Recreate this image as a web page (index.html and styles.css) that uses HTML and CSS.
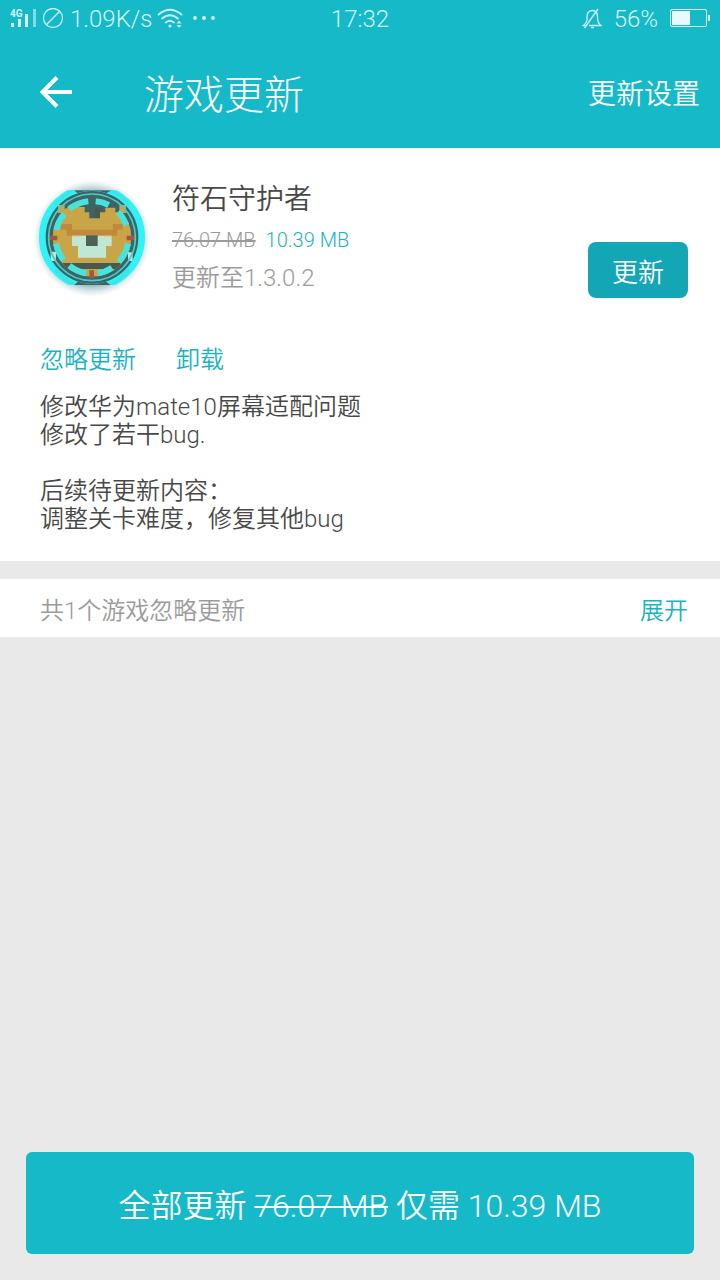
FILE: index.html
```html
<!DOCTYPE html>
<html lang="zh-CN">
<head>
  <meta charset="UTF-8">
  <meta name="viewport" content="width=device-width, initial-scale=1.0">
  <title>游戏更新</title>
  <link rel="stylesheet" href="styles.css">
</head>
<body>
  <div class="statusbar">
    <div class="status-left">
      <svg class="signal" width="28" height="22" viewBox="0 0 28 22">
        <text x="0" y="9" class="net">4G</text>
        <g fill="#d6f6fa">
          <rect x="1" y="15" width="3" height="4"/>
          <rect x="8" y="11" width="3" height="8"/>
          <rect x="15" y="6" width="3" height="13"/>
        </g>
        <rect x="23" y="1" width="3" height="18" fill="#7edce6"/>
      </svg>
      <svg width="22" height="22" viewBox="0 0 22 22" fill="none" stroke="#c4f2f7" stroke-width="1.3">
        <circle cx="11" cy="10" r="9.5"/>
        <path d="M4.3 16.7 17.7 3.3"/>
      </svg>
      <span class="speed">1.09K/s</span>
      <svg class="wifi" width="26" height="22" viewBox="0 0 26 22" fill="none" stroke="#c4f2f7" stroke-width="1.9">
        <path d="M1 7Q13-3.500 25 7"/>
        <path d="M4.5 11Q13 3.5 21.5 11"/>
        <path d="M8.2 15Q13 10.5 17.5 15"/>
        <circle cx="13" cy="18" r="1.6" fill="#c4f2f7" stroke="none"/>
        <path d="M19.5 15.5 22 12.5l2.5 3zM19.5 17h5L22 20z" fill="#c4f2f7" stroke="none"/>
      </svg>
      <svg class="dots" width="24" height="22" viewBox="0 0 24 22" fill="#d6f6fa">
        <circle cx="3" cy="10" r="1.9"/>
        <circle cx="12" cy="10" r="1.9"/>
        <circle cx="21" cy="10" r="1.9"/>
      </svg>
    </div>
    <span>17:32</span>
    <div class="status-right">
      <svg width="20" height="22" viewBox="0 0 20 22" fill="none" stroke="#c4f2f7" stroke-width="1.4">
        <path d="M5 12.5V9c0-4 2-6.500 5.500-6.500S15.500 5 15.500 9c0 4 .5 6.500 3.500 8.500H7M5 12c-.5 3-1.500 4-3.500 5.500H3.500M9 19.500h3"/>
        <path d="M2.500 20 16 1"/>
      </svg>
      <span class="percent">56%</span>
      <svg width="40" height="20" viewBox="0 0 40 20">
        <rect x="0.5" y="0.5" width="36" height="17" rx="1.5" fill="none" stroke="#d6f6fa" stroke-width="1"/>
        <rect x="2" y="2" width="18" height="14" fill="#e8fafc"/>
        <rect x="38" y="6" width="2" height="6" fill="#d6f6fa"/>
      </svg>
    </div>
  </div>

  <header class="topbar">
    <button type="button" class="back" aria-label="返回">
      <svg width="34" height="34" viewBox="0 0 34 34" fill="none" stroke="#fff" stroke-width="4">
        <path d="M32 17H3M17 2.500 2.500 17 17 31.500"/>
      </svg>
    </button>
    <h1>游戏更新</h1>
    <a href="#" class="settings">更新设置</a>
  </header>

  <main>
    <section class="card">
      <div class="game">
        <svg class="avatar" width="104" height="106" viewBox="30 27 312 318">
          <defs>
            <clipPath id="cut"><path d="M0 46H390V330H0z"/></clipPath>
            <clipPath id="disc"><circle cx="186" cy="187" r="148"/></clipPath>
            <clipPath id="face"><circle cx="186" cy="187" r="118"/></clipPath>
            <radialGradient id="glow">
              <stop offset="0.8" stop-color="#5c8c9c" stop-opacity="0.6"/>
              <stop offset="1" stop-color="#a8c4cc" stop-opacity="0"/>
            </radialGradient>
          </defs>
          <circle cx="186" cy="190" r="176" fill="url(#glow)"/>
          <g clip-path="url(#cut)">
            <g clip-path="url(#disc)">
              <rect x="20" y="40" width="340" height="300" fill="#3f6363"/>
              <path fill="#c9a548" d="M84 90h20v24H84zM268 90h20v24h-20z"/>
              <g clip-path="url(#face)">
                <path fill="#c9a548" d="M60 100h52v-14h20v10h32v16h14v18h32v-18h16v-14h30v14h60v210H60z"/>
                <path fill="#465b50" d="M70 264h232v18H70zM192 100h18v29h-18z"/>
              </g>
              <path fill="#c1893d" d="M92 147h34v17h122v-17h30v17h-16v18H110v-18H92z"/>
              <path fill="#c0e7d4" d="M126 182h119v31h-17v35h-84v-35h-18z"/>
              <path fill="#d8cf97" d="M126 182h26v4h-26zM222 182h23v4h-23z"/>
              <rect x="168" y="181" width="35" height="32" fill="#4b6356"/>
              <path fill="#a4573c" d="M60 182h22v14H60zM290 182h24v14h-24zM178 286h14v24h-14z"/>
              <path fill="#b9e6dc" d="M62 230h16v28H62zM294 232h14v26h-14z"/>
            </g>
            <g fill="none" stroke="#3be5e6">
              <circle cx="186" cy="187" r="130" stroke="#46ced0" stroke-width="5"/>
              <path stroke="#47e3df" stroke-width="18" d="M197 79A109 109 0 0 1 236 90M264 111A109 109 0 0 1 289 151M294 206A109 109 0 0 1 266 261M246 278A109 109 0 0 1 203 295M169 295A109 109 0 0 1 118 272M101 255A109 109 0 0 1 78 206M79 165A109 109 0 0 1 103 117M118 102A109 109 0 0 1 175 79"/>
              <circle cx="186" cy="187" r="149" stroke="#2ff3f7" stroke-width="20"/>
              <path stroke-width="10" d="M75 90Q100 60 132 46M240 46Q276 62 298 92M297 282Q272 314 242 328M76 284Q102 314 132 328"/>
            </g>
            <path fill="#3f6363" d="M132 46h112l-14 8q-44-14-88 0zM132 330h110l-14-10q-42 12-84 0z"/>
          </g>
        </svg>
        <div class="info">
          <h2>符石守护者</h2>
          <p class="size"><del>76.07 MB</del><span>10.39 MB</span></p>
          <p class="version">更新至1.3.0.2</p>
        </div>
        <button type="button" class="update">更新</button>
      </div>
      <div class="actions">
        <button type="button">忽略更新</button>
        <button type="button">卸载</button>
      </div>
      <p class="notes">修改华为mate10屏幕适配问题<br>修改了若干bug.<br><br>后续待更新内容：<br>调整关卡难度，修复其他bug</p>
    </section>

    <section class="ignored">
      <span>共1个游戏忽略更新</span>
      <button type="button">展开</button>
    </section>
  </main>

  <footer>
    <button type="button" class="update-all">全部更新 <del>76.07 MB</del> 仅需 10.39 MB</button>
  </footer>
</body>
</html>
```
FILE: styles.css
```css
* {
  box-sizing: border-box;
}
body {
  margin: 0;
  min-height: 100vh;
  display: flex;
  flex-direction: column;
  background: #e9e9e9;
  color: #484848;
  font-family: Roboto, "Noto Sans CJK SC", sans-serif;
  font-weight: 350;
}
h1, h2, p {
  margin: 0;
  font-weight: 350;
}
button {
  padding: 0;
  border: none;
  background: none;
  color: #18b4c2;
  font: inherit;
  cursor: pointer;
}
svg {
  display: block;
  flex: none;
}
del {
  text-decoration-thickness: 2px;
}

/* status bar */
.statusbar {
  display: grid;
  grid-template-columns: 1fr auto 1fr;
  align-items: center;
  height: 38px;
  padding: 0 10px;
  background: #15b9c8;
  color: #d6f6fa;
  font-size: 24px;
}
.status-left, .status-right {
  display: flex;
  align-items: center;
}
.status-right {
  justify-content: flex-end;
}
.net {
  fill: #d6f6fa;
  font-size: 10px;
  font-weight: 700;
}
.signal {
  margin-right: 4px;
}
.speed {
  margin: 0 4px 0 6px;
}
.dots {
  margin-left: 9px;
}
.percent {
  margin: 0 12px 0 12px;
}

/* title bar */
.topbar {
  display: flex;
  align-items: center;
  height: 110px;
  padding: 0 20px 2px 40px;
  background: #15b9c8;
  color: #fff;
}
.topbar h1 {
  flex: 1;
  margin-left: 70px;
  font-size: 40px;
  font-weight: 300;
}
.settings {
  color: #fff;
  font-size: 28px;
  text-decoration: none;
}

main {
  flex: 1;
}
.card {
  padding: 32px 32px 28px 40px;
  background: #fff;
}
.game {
  display: flex;
  align-items: flex-start;
}
.avatar {
  overflow: visible;
  margin-top: 4px;
}
.info {
  flex: 1;
  margin-left: 28px;
}
.info h2 {
  font-size: 28px;
  line-height: 40px;
}
.size {
  margin-top: 4px;
  font-size: 20px;
  line-height: 32px;
  color: #18b4c2;
}
.size del {
  margin-right: 10px;
  color: #9b9b9b;
}
.version {
  padding-top: 2px;
  font-size: 24px;
  line-height: 40px;
  color: #9b9b9b;
}
.update {
  align-self: flex-end;
  width: 100px;
  height: 56px;
  border-radius: 8px;
  background: #13a6b4;
  color: #fff;
  font-size: 26px;
}
.actions {
  display: flex;
  gap: 40px;
  margin-top: 46px;
  font-size: 24px;
  line-height: 32px;
}
.notes {
  margin-top: 17px;
  font-size: 24px;
  line-height: 28px;
}
.ignored {
  display: flex;
  justify-content: space-between;
  margin-top: 18px;
  padding: 16px 32px 10px 40px;
  background: #fff;
  color: #9b9b9b;
  font-size: 24px;
  line-height: 32px;
}

footer {
  padding: 26px;
}
.update-all {
  width: 100%;
  height: 102px;
  border-radius: 6px;
  background: #15b9c8;
  color: #fff;
  font-size: 32px;
}
```
